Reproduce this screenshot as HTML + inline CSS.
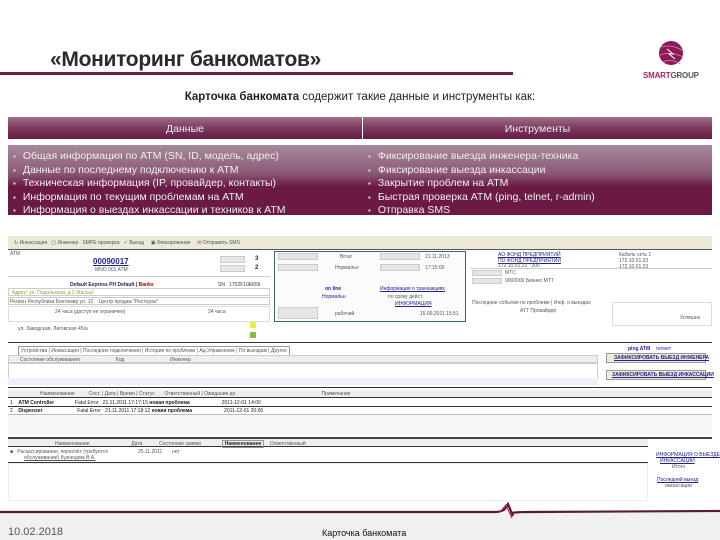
<!DOCTYPE html>
<html><head><meta charset="utf-8"><style>
*{margin:0;padding:0;box-sizing:border-box}
body{width:720px;height:540px;position:relative;background:#fff;font-family:"Liberation Sans",sans-serif;overflow:hidden}
.a{position:absolute}
.t{font-size:5px;color:#555;white-space:nowrap;position:absolute}
.b{color:#222;font-weight:bold}
.lk{color:#22228a;text-decoration:underline}
.hl{position:absolute;height:1px;background:#333}
.gl{position:absolute;background:#e6e6e6;border:1px solid #ccc}
ul{list-style:none}
li{font-size:10.5px;color:#eee;line-height:12.5px;white-space:nowrap}
li:before{content:"▪";font-size:8px;margin-right:7px;color:#ddd}
</style></head><body>
<!-- title -->
<div class="a" style="left:50px;top:48px;font-size:21px;font-weight:bold;color:#2a2a2a;letter-spacing:-0.3px">«Мониторинг банкоматов»</div>
<div class="a" style="left:0;top:72px;width:513px;height:3px;background:#6d1f48"></div>
<!-- logo -->
<svg class="a" style="left:655px;top:37px" width="32" height="32" viewBox="0 0 32 32">
<circle cx="16" cy="16" r="12" fill="#8c1a55"/>
<path d="M6 10 Q16 7 27 13 M5 18 Q16 14 28 20 M8 25 Q16 21 25 27" stroke="#d88aaa" stroke-width="0.8" fill="none"/>
<path d="M12 12 L18 17 L14 17 L20 22" stroke="#fff" stroke-width="1" fill="none"/>
</svg>
<div class="a" style="left:643px;top:71px;font-size:8px;font-weight:bold;letter-spacing:-0.2px"><span style="color:#b0206a">SMART</span><span style="color:#555">GROUP</span></div>
<!-- subtitle -->
<div class="a" style="left:0;width:720px;top:91px;text-align:center;font-size:11.5px;color:#222"><b>Карточка банкомата</b> содержит такие данные и инструменты как:</div>
<!-- table -->
<div class="a" style="left:8px;top:117px;width:704px;height:22px;background:linear-gradient(#a07088,#7a3a5c 50%,#6a1a44)"></div>
<div class="a" style="left:362px;top:117px;width:1px;height:100px;background:#fff"></div>
<div class="a" style="left:8px;top:123px;width:354px;text-align:center;font-size:10.5px;color:#eee">Данные</div>
<div class="a" style="left:363px;top:123px;width:349px;text-align:center;font-size:10.5px;color:#eee">Инструменты</div>
<div class="a" style="left:8px;top:145px;width:704px;height:70px;background:linear-gradient(#a88a9c,#8c5a76 40%,#6a1a44 60%,#6a1a44)"></div>
<ul class="a" style="left:13px;top:150px"><li>Общая информация по ATM (SN, ID, модель, адрес)</li><li>Данные по последнему подключению к ATM</li><li>Техническая информация (IP, провайдер, контакты)</li><li>Информация по текущим проблемам на ATM</li><li>Информация о выездах инкассации и техников к ATM</li></ul>
<ul class="a" style="left:368px;top:150px"><li>Фиксирование выезда инженера-техника</li><li>Фиксирование выезда инкассации</li><li>Закрытие проблем на ATM</li><li>Быстрая проверка ATM (ping, telnet, r-admin)</li><li>Отправка SMS</li></ul>
<!-- app screenshot -->
<div class="a" style="left:8px;top:236px;width:704px;height:14px;background:#ece9d8;border-bottom:1px solid #555"></div>
<div class="t" style="left:14px;top:240px">↻ Инкассация &nbsp; ▢ Инженер &nbsp; SMPE проверка &nbsp; ✓ Выезд &nbsp;&nbsp;&nbsp; ▣ Фиксирование &nbsp;&nbsp;&nbsp; ✉ Отправить SMS</div>
<div class="t" style="left:10px;top:251px">ATM</div>
<div class="t b lk" style="left:93px;top:257px;font-size:8px;color:#22228a">00090017</div>
<div class="t" style="left:95px;top:267px">MNO 001 ATM</div>
<div class="gl" style="left:220px;top:256px;width:25px;height:7px"></div><div class="gl" style="left:220px;top:265px;width:25px;height:7px"></div>
<div class="t b" style="left:255px;top:256px;font-size:6px">3</div><div class="t b" style="left:255px;top:265px;font-size:6px">2</div>
<div class="hl" style="left:8px;top:276px;width:262px;background:#ccc"></div>
<div class="t" style="left:70px;top:282px;color:#226"><b>Default Express PH Default | <span style="color:#a00">Banks</span></b></div>
<div class="t" style="left:218px;top:282px;color:#333">SN &nbsp; 1702F10E656</div>
<div class="a" style="left:8px;top:288px;width:262px;height:8px;border:1px solid #ccc"></div>
<div class="t" style="left:12px;top:290px;color:#993">Адрес: ул. Подольская, д.2 (Кассы)</div>
<div class="a" style="left:8px;top:297px;width:262px;height:8px;border:1px solid #ccc"></div>
<div class="t" style="left:10px;top:299px">Регион Республика Бектемир ул. 12 &nbsp;&nbsp; Центр продаж "Ресторан"</div>
<div class="a" style="left:8px;top:306px;width:262px;height:16px;border:1px solid #ddd"></div>
<div class="t" style="left:55px;top:309px">24 часа (доступ не ограничен)</div><div class="t" style="left:208px;top:309px">24 часа</div>
<div class="t" style="left:18px;top:326px">ул. Заводская, Лиговская 45/a</div>
<div class="a" style="left:250px;top:322px;width:6px;height:6px;background:#ee3"></div>
<div class="a" style="left:250px;top:332px;width:6px;height:6px;background:#8b4"></div>
<!-- middle box -->
<div class="a" style="left:274px;top:251px;width:192px;height:71px;border:1px solid #3a6a6a;background:#fbfbfb"></div>
<div class="gl" style="left:278px;top:253px;width:40px;height:7px"></div><div class="gl" style="left:278px;top:264px;width:40px;height:7px"></div>
<div class="gl" style="left:380px;top:253px;width:40px;height:7px"></div><div class="gl" style="left:380px;top:264px;width:40px;height:7px"></div>
<div class="t" style="left:340px;top:254px">Brnur</div><div class="t" style="left:425px;top:254px">21.11.2013</div>
<div class="t" style="left:335px;top:265px">Нормальн</div><div class="t" style="left:425px;top:265px">17:15:00</div>
<div class="t b" style="left:325px;top:286px;color:#22a">on line</div><div class="t lk" style="left:380px;top:286px">Информация о транзакциях</div>
<div class="t" style="left:322px;top:294px;color:#22a">Нормальн</div><div class="t" style="left:388px;top:294px">по сроку дейст.</div>
<div class="t lk" style="left:395px;top:301px">ИНФОРМАЦИЯ</div>
<div class="gl" style="left:278px;top:307px;width:40px;height:12px"></div>
<div class="t" style="left:335px;top:311px">рабочий</div><div class="t" style="left:420px;top:311px">15.09.2011 15:51</div>
<!-- right info -->
<div class="t lk" style="left:498px;top:252px">АО ФОНД ПРЕДПРИЯТИЙ</div><div class="t lk" style="left:498px;top:258px">ПО ФОНД ПРЕДПРИЯТИЙ</div>
<div class="t" style="left:619px;top:252px">Кабель сеть 1</div><div class="t" style="left:619px;top:258px">172.10.01.23</div>
<div class="t" style="left:498px;top:263px">172.10.01.23 &nbsp; 200</div><div class="t" style="left:619px;top:264px">172.10.01.23</div>
<div class="hl" style="left:470px;top:268px;width:242px;background:#ccc"></div>
<div class="gl" style="left:472px;top:270px;width:30px;height:6px"></div><div class="t" style="left:505px;top:270px">МТС</div>
<div class="gl" style="left:472px;top:278px;width:30px;height:6px"></div><div class="t" style="left:505px;top:278px">9000000 Бизнес МТТ</div>
<div class="t" style="left:472px;top:300px">Последние события по проблеме | Инф. о выездах</div>
<div class="t" style="left:520px;top:308px">ATT Провайдер</div>
<div class="a" style="left:612px;top:302px;width:100px;height:24px;border:1px solid #ddd"></div>
<div class="t" style="left:680px;top:315px">Успешно</div>
<div class="a" style="left:8px;top:342px;width:704px;height:1px;background:#333"></div>
<!-- tabs -->
<div class="t" style="left:18px;top:346px;border:1px solid #999;padding:1px 2px;background:#fff">Устройства | Инкассация | Последние подключения | История по проблеме | Ад.Управление | По выездам | Другое</div>
<div class="a" style="left:8px;top:355px;width:590px;height:8px;background:#eee;border:1px solid #ccc"></div>
<div class="t" style="left:20px;top:357px">Состояние обслуживания &nbsp;&nbsp;&nbsp;&nbsp;&nbsp;&nbsp;&nbsp;&nbsp;&nbsp;&nbsp;&nbsp;&nbsp;&nbsp;&nbsp;&nbsp;&nbsp;&nbsp;&nbsp;&nbsp;&nbsp;&nbsp;&nbsp;&nbsp;&nbsp; Код &nbsp;&nbsp;&nbsp;&nbsp;&nbsp;&nbsp;&nbsp;&nbsp;&nbsp;&nbsp;&nbsp;&nbsp;&nbsp;&nbsp;&nbsp;&nbsp;&nbsp;&nbsp;&nbsp;&nbsp;&nbsp;&nbsp;&nbsp;&nbsp;&nbsp;&nbsp;&nbsp;&nbsp;&nbsp;&nbsp;&nbsp; Инженер</div>
<div class="a" style="left:8px;top:363px;width:590px;height:22px;border:1px solid #ccc"></div>
<div class="a" style="left:8px;top:378px;width:590px;height:7px;background:#eef"></div>
<div class="t" style="left:628px;top:346px;color:#22a"><b>ping ATM</b> &nbsp;&nbsp; телнет</div>
<div class="a" style="left:606px;top:353px;width:100px;height:10px;background:#ece9d8;border:1px solid #999"></div>
<div class="t lk b" style="left:614px;top:355px">ЗАФИКСИРОВАТЬ ВЫЕЗД ИНЖЕНЕРА</div>
<div class="a" style="left:606px;top:370px;width:100px;height:10px;background:#ece9d8;border:1px solid #999"></div>
<div class="t lk b" style="left:612px;top:372px">ЗАФИКСИРОВАТЬ ВЫЕЗД ИНКАССАЦИИ</div>
<div class="a" style="left:8px;top:387px;width:704px;height:1px;background:#333"></div>
<div class="a" style="left:8px;top:390px;width:704px;height:8px;background:#eee;border-bottom:1px solid #333"></div>
<div class="t" style="left:40px;top:391px">Наименование &nbsp;&nbsp;&nbsp;&nbsp;&nbsp;&nbsp;&nbsp;&nbsp; Сост. | Дата | Время | Статус &nbsp;&nbsp;&nbsp;&nbsp;&nbsp; Ответственный | Ожидание до &nbsp;&nbsp;&nbsp;&nbsp;&nbsp;&nbsp;&nbsp;&nbsp;&nbsp;&nbsp;&nbsp;&nbsp;&nbsp;&nbsp;&nbsp;&nbsp;&nbsp;&nbsp;&nbsp;&nbsp;&nbsp;&nbsp;&nbsp;&nbsp;&nbsp;&nbsp;&nbsp;&nbsp;&nbsp;&nbsp;&nbsp;&nbsp;&nbsp;&nbsp;&nbsp;&nbsp;&nbsp;&nbsp;&nbsp;&nbsp;&nbsp;&nbsp;&nbsp;&nbsp;&nbsp;&nbsp;&nbsp;&nbsp;&nbsp;&nbsp;&nbsp;&nbsp;&nbsp;&nbsp;&nbsp;&nbsp;&nbsp;&nbsp;&nbsp;&nbsp; Примечание</div>
<div class="t" style="left:10px;top:400px;color:#222">1 &nbsp;&nbsp; <b>ATM Controller</b> &nbsp;&nbsp;&nbsp;&nbsp;&nbsp;&nbsp;&nbsp;&nbsp;&nbsp;&nbsp;&nbsp;&nbsp;&nbsp; Fatal Error &nbsp; 21.11.2011 17:17:15 <b>новая проблема</b> &nbsp;&nbsp;&nbsp;&nbsp;&nbsp;&nbsp;&nbsp;&nbsp;&nbsp;&nbsp;&nbsp;&nbsp;&nbsp;&nbsp;&nbsp;&nbsp;&nbsp;&nbsp;&nbsp;&nbsp;&nbsp; 2011-12-01 14:00</div>
<div class="hl" style="left:8px;top:406px;width:704px"></div>
<div class="t" style="left:10px;top:408px;color:#222">2 &nbsp;&nbsp; <b>Dispenser</b> &nbsp;&nbsp;&nbsp;&nbsp;&nbsp;&nbsp;&nbsp;&nbsp;&nbsp;&nbsp;&nbsp;&nbsp;&nbsp;&nbsp;&nbsp;&nbsp;&nbsp;&nbsp;&nbsp;&nbsp;&nbsp;&nbsp;&nbsp; Fatal Error &nbsp; 21.11.2011 17:18:12 <b>новая проблема</b> &nbsp;&nbsp;&nbsp;&nbsp;&nbsp;&nbsp;&nbsp;&nbsp;&nbsp;&nbsp;&nbsp;&nbsp;&nbsp;&nbsp;&nbsp;&nbsp;&nbsp;&nbsp;&nbsp;&nbsp;&nbsp; 2011-12-01 20:00</div>
<div class="hl" style="left:8px;top:414px;width:704px;background:#bbb"></div>
<div class="a" style="left:8px;top:415px;width:704px;height:20px;background:#f7f7f7"></div>
<div class="a" style="left:8px;top:437px;width:704px;height:2px;background:#444"></div>
<div class="a" style="left:8px;top:439px;width:640px;height:8px;background:#eee;border-bottom:1px solid #333"></div>
<div class="t" style="left:55px;top:441px">Наименование &nbsp;&nbsp;&nbsp;&nbsp;&nbsp;&nbsp;&nbsp;&nbsp;&nbsp;&nbsp;&nbsp;&nbsp;&nbsp;&nbsp;&nbsp;&nbsp;&nbsp;&nbsp;&nbsp;&nbsp;&nbsp;&nbsp;&nbsp;&nbsp;&nbsp;&nbsp;&nbsp;&nbsp; Дата &nbsp;&nbsp;&nbsp;&nbsp;&nbsp;&nbsp;&nbsp;&nbsp;&nbsp;&nbsp; Состояние заявки &nbsp;&nbsp;&nbsp;&nbsp;&nbsp;&nbsp;&nbsp;&nbsp;&nbsp;&nbsp;&nbsp;&nbsp;&nbsp; <b style="color:#222;border:1px solid #999;padding:0 2px">Наименование</b> &nbsp;&nbsp; Ответственный</div>
<div class="t" style="left:10px;top:449px">■ &nbsp; Раскассирование, пересчёт (требуется</div>
<div class="t" style="left:24px;top:455px;text-decoration:underline">обслуживание) Кузнецова В.А.</div>
<div class="t" style="left:138px;top:449px">25.11.2011 &nbsp;&nbsp;&nbsp;&nbsp;&nbsp; нет</div>
<div class="hl" style="left:8px;top:462px;width:640px"></div>
<div class="a" style="left:8px;top:463px;width:640px;height:38px;border:1px solid #eee"></div>
<div class="t lk" style="left:656px;top:452px">ИНФОРМАЦИЯ О ВЫЕЗДЕ</div>
<div class="t lk" style="left:660px;top:458px">ИНКАССАЦИИ</div>
<div class="t" style="left:672px;top:464px">Итого</div>
<div class="t lk" style="left:657px;top:477px">Последний выезд</div>
<div class="t" style="left:665px;top:483px">инкассации</div>
<!-- footer -->
<div class="a" style="left:0;top:513px;width:720px;height:27px;background:#f0f0f0"></div>
<svg class="a" style="left:0;top:500px" width="720" height="25" viewBox="0 0 720 25">
<path d="M0 12 L495 12 Q502 12 505 9 L508 4 L513 16 L512 13 Q516 12 530 12 L720 11" stroke="#5a1a36" stroke-width="2.2" fill="none"/>
<path d="M500 12 L506 5 L512 18" stroke="#c01a60" stroke-width="1.2" fill="none"/>
</svg>
<div class="a" style="left:8px;top:526px;font-size:11px;color:#555">10.02.2018</div>
<div class="a" style="left:322px;top:528px;font-size:9px;color:#111">Карточка банкомата</div>
</body></html>
